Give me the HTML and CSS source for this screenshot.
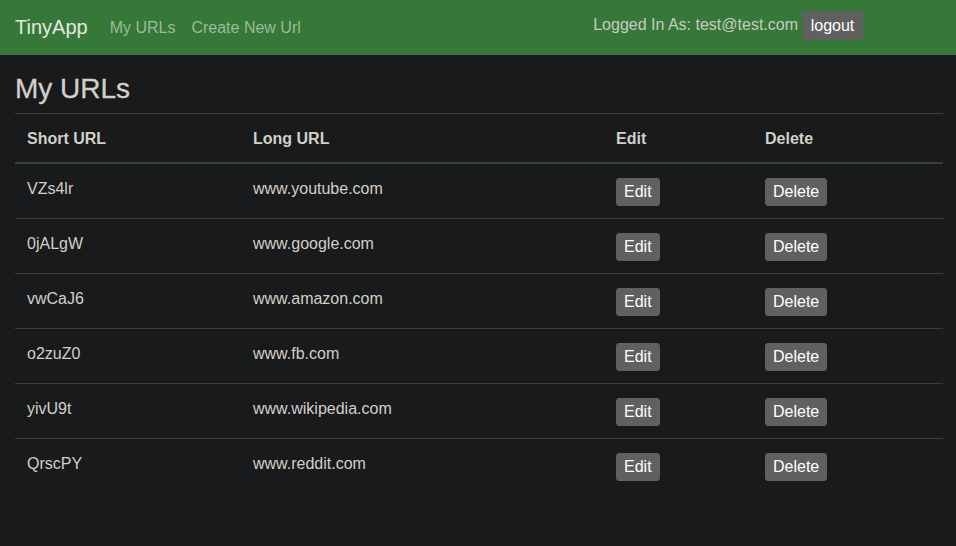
FILE: index.html
```html
<!DOCTYPE html>
<html>
<head>
<meta charset="utf-8">
<title>TinyApp</title>
<link rel="stylesheet" href="styles.css">
</head>
<body>
<nav class="navbar">
  <a class="brand" href="#">TinyApp</a>
  <a class="nav-link" href="#">My URLs</a>
  <a class="nav-link" href="#">Create New Url</a>
  <div class="user">
    <span class="user-label">Logged In As: test@test.com</span>
    <button class="logout">logout</button>
  </div>
</nav>
<main class="content">
  <h3 class="title">My URLs</h3>
  <table class="urls">
    <colgroup>
      <col class="c1"><col class="c2"><col class="c3"><col class="c4">
    </colgroup>
    <thead>
      <tr><th>Short URL</th><th>Long URL</th><th>Edit</th><th>Delete</th></tr>
    </thead>
    <tbody>
      <tr><td>VZs4lr</td><td>www.youtube.com</td><td><button class="btn">Edit</button></td><td><button class="btn">Delete</button></td></tr>
      <tr><td>0jALgW</td><td>www.google.com</td><td><button class="btn">Edit</button></td><td><button class="btn">Delete</button></td></tr>
      <tr><td>vwCaJ6</td><td>www.amazon.com</td><td><button class="btn">Edit</button></td><td><button class="btn">Delete</button></td></tr>
      <tr><td>o2zuZ0</td><td>www.fb.com</td><td><button class="btn">Edit</button></td><td><button class="btn">Delete</button></td></tr>
      <tr><td>yivU9t</td><td>www.wikipedia.com</td><td><button class="btn">Edit</button></td><td><button class="btn">Delete</button></td></tr>
      <tr><td>QrscPY</td><td>www.reddit.com</td><td><button class="btn">Edit</button></td><td><button class="btn">Delete</button></td></tr>
    </tbody>
  </table>
</main>
</body>
</html>
```
FILE: styles.css
```css
* { box-sizing: border-box; }
html, body { margin: 0; padding: 0; }
body {
  background: #181a1b;
  color: #d3cfc9;
  font-family: "Liberation Sans", Arial, sans-serif;
  font-size: 16px;
  line-height: 24px;
  height: 546px;
}
.navbar {
  display: flex;
  align-items: center;
  height: 55px;
  padding: 0 16px 0 15px;
  background: #357838;
}
.brand {
  color: #e8e6e3;
  text-decoration: none;
  font-size: 20px;
  line-height: 30px;
  margin-right: 14px;
  margin-top: -1px;
}
.nav-link {
  color: #9bbb9c;
  text-decoration: none;
  padding: 0 8px;
  margin-top: 1px;
}
.user {
  margin-left: auto;
  margin-right: 77px;
  display: flex;
  align-items: center;
  gap: 4px;
  margin-top: -5px;
}
.user-label { color: #c9cbc2; }
.logout {
  background: #606060;
  color: #ffffff;
  border: 0;
  border-radius: 3px;
  font-family: inherit;
  font-size: 16px;
  line-height: 25px;
  padding: 2px 8px;
  width: 61px;
}
.content { padding: 17px 13px 0 15px; }
.title {
  margin: 0 0 8px;
  font-size: 28px;
  line-height: 33px;
  font-weight: 500;
  color: #d3cfc9;
  -webkit-text-stroke: 0.3px #d3cfc9;
}
.urls {
  width: 928px;
  border-collapse: collapse;
  table-layout: fixed;
}
.c1 { width: 226px; }
.c2 { width: 363px; }
.c3 { width: 149px; }
.c4 { width: 190px; }
.urls th, .urls td {
  text-align: left;
  vertical-align: top;
  padding: 13px 12px 12px;
  border-top: 1px solid #383d3f;
}
.urls th {
  font-weight: bold;
  padding-bottom: 11px;
  border-bottom: 2px solid #383d3f;
}
.btn {
  display: inline-block;
  vertical-align: top;
  margin-top: 1px;
  background: #606060;
  color: #ffffff;
  border: 1px solid #606060;
  border-radius: 3px;
  font-family: inherit;
  font-size: 16px;
  line-height: 24px;
  padding: 1px 7px;
}
```
